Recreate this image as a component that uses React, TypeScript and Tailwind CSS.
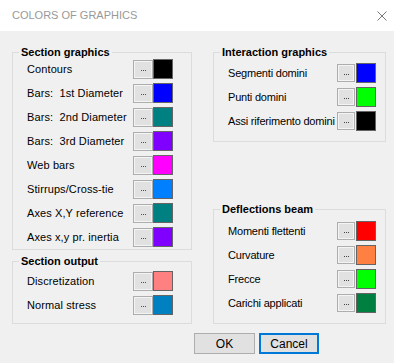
import React from 'react';

type Item = { label: string; color: string };

const sectionGraphics: Item[] = [
    { label: 'Contours', color: '#000000' },
    { label: 'Bars:  1st Diameter', color: '#0000ff' },
    { label: 'Bars:  2nd Diameter', color: '#008080' },
    { label: 'Bars:  3rd Diameter', color: '#8000ff' },
    { label: 'Web bars', color: '#ff00ff' },
    { label: 'Stirrups/Cross-tie', color: '#0080ff' },
    { label: 'Axes X,Y reference', color: '#008080' },
    { label: 'Axes x,y pr. inertia', color: '#8000ff' },
];

const sectionOutput: Item[] = [
    { label: 'Discretization', color: '#ff8080' },
    { label: 'Normal stress', color: '#0080c0' },
];

const interaction: Item[] = [
    { label: 'Segmenti domini', color: '#0000ff' },
    { label: 'Punti domini', color: '#00ff00' },
    { label: 'Assi riferimento domini', color: '#000000' },
];

const deflections: Item[] = [
    { label: 'Momenti flettenti', color: '#ff0000' },
    { label: 'Curvature', color: '#ff8040' },
    { label: 'Frecce', color: '#00ff00' },
    { label: 'Carichi applicati', color: '#008040' },
];

const Dots: React.FC<{ color: string; size: number }> = ({ color, size }) => (
    <span className="flex gap-[1px]">
        {[0, 1, 2].map(i => (
            <span key={i} className="block" style={{ width: size, height: size, backgroundColor: color }} />
        ))}
    </span>
);

const LeftRow: React.FC<{ item: Item }> = ({ item }) => (
    <div className="flex items-center h-6 pl-[14px]">
        <span className="w-[106px] text-[11px] text-black whitespace-pre tracking-[0.1px]">{item.label}</span>
        <button className="w-5 h-[19px] border border-[#adadad] bg-[#e1e1e1] shadow-[inset_0_0_0_1px_#f4f4f4] flex items-center justify-center pt-[2px]">
            <Dots color="#0063b1" size={1} />
        </button>
        <span className="w-5 h-5 border border-[#646464]" style={{ backgroundColor: item.color }} />
    </div>
);

const RightRow: React.FC<{ item: Item }> = ({ item }) => (
    <div className="flex items-center h-6 pl-[14px]">
        <span className="w-[109px] text-[11px] text-black whitespace-nowrap tracking-[-0.2px]">{item.label}</span>
        <button className="w-[18px] h-[18px] border border-[#adadad] bg-[#e1e1e1] shadow-[inset_0_0_0_1px_#f4f4f4] flex items-center justify-center pt-[2px]">
            <Dots color="#444444" size={1} />
        </button>
        <span className="ml-px w-5 h-5 border border-[#646464]" style={{ backgroundColor: item.color }} />
    </div>
);

const Legend: React.FC<{ title: string }> = ({ title }) => (
    <legend className="ml-[6px] px-[2px] text-[11px] leading-[12px] font-bold text-black">{title}</legend>
);

export default function App() {
    return (
        <div className="w-[394px] h-[363px] bg-[#f0f0f0] font-['Liberation_Sans',sans-serif] overflow-hidden">
            <div className="h-[31px] bg-white flex items-center justify-between pl-3 pr-[7px]">
                <span className="text-[11px] text-[#999999]">COLORS OF GRAPHICS</span>
                <svg width="10" height="10" viewBox="0 0 10 10">
                    <path d="M0.5 0.5 L9.5 9.5 M9.5 0.5 L0.5 9.5" stroke="#777" strokeWidth="1" />
                </svg>
            </div>

            <div className="flex pl-3 pt-[15px]">
                <div className="w-[180px] flex flex-col">
                    <fieldset className="h-[204px] border border-[#dcdcdc]">
                        <Legend title="Section graphics" />
                        <div className="-mt-px">
                            {sectionGraphics.map(i => <LeftRow key={i.label} item={i} />)}
                        </div>
                    </fieldset>
                    <fieldset className="mt-[5px] h-[69px] border border-[#dcdcdc]">
                        <Legend title="Section output" />
                        <div className="mt-[2px]">
                            {sectionOutput.map(i => <LeftRow key={i.label} item={i} />)}
                        </div>
                    </fieldset>
                </div>

                <div className="ml-[21px] w-[173px] flex flex-col">
                    <fieldset className="h-[96px] border border-[#dcdcdc]">
                        <Legend title="Interaction graphics" />
                        <div className="mt-[3px]">
                            {interaction.map(i => <RightRow key={i.label} item={i} />)}
                        </div>
                    </fieldset>
                    <fieldset className="mt-[61px] h-[121px] border border-[#dcdcdc]">
                        <Legend title="Deflections beam" />
                        <div className="mt-[4px]">
                            {deflections.map(i => <RightRow key={i.label} item={i} />)}
                        </div>
                    </fieldset>
                </div>
            </div>

            <div className="flex gap-1 pl-[194px] mt-[9px]">
                <button className="w-[61px] h-[21px] border border-[#adadad] bg-[#e1e1e1] text-[12px] text-black">OK</button>
                <button className="w-[60px] h-[21px] border-2 border-[#0078d7] bg-[#e1e1e1] text-[12px] text-black">Cancel</button>
            </div>
        </div>
    );
}
